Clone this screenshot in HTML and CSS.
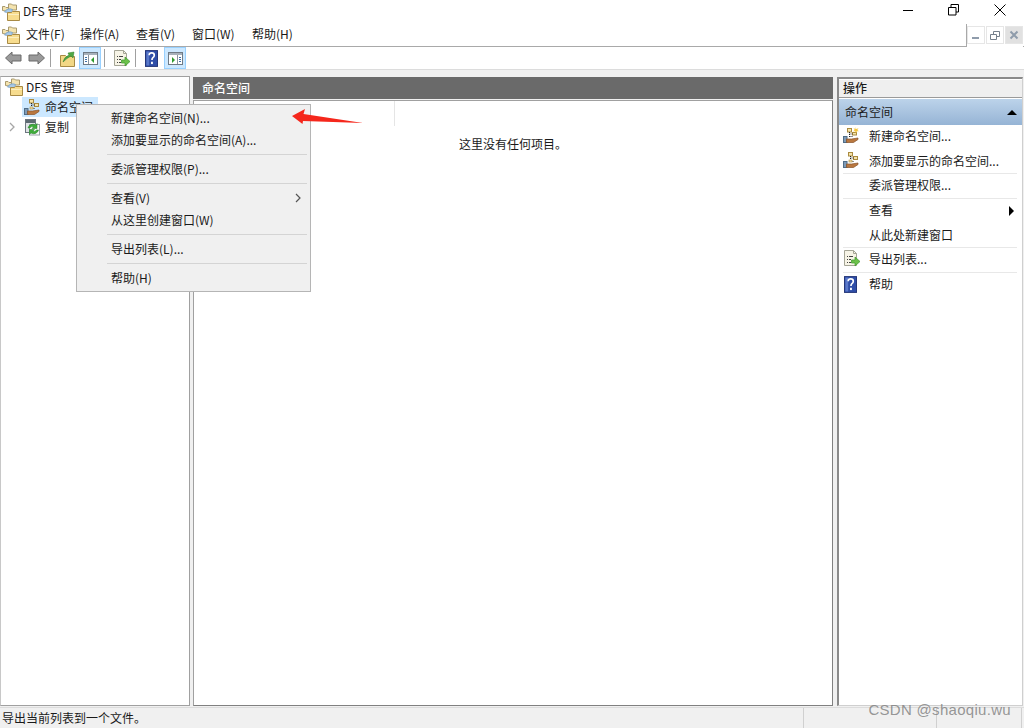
FILE: index.html
```html
<!DOCTYPE html>
<html lang="zh-CN">
  <head>
    <meta charset="UTF-8" />
    <title>DFS 管理</title>
    <link rel="stylesheet" href="styles.css">
  </head>
  <body>
    <svg class="defs" width="0" height="0">
      <defs>
        <symbol id="dfs" viewBox="0 0 18 18">
          <path d="M.5 7.500 v-4 h2.500 l1 1 h3 v4 z" fill="#f4e3ae" stroke="#a99a6e"/>
          <path d="M6.500 4 v-3 h3 l1 1 h4 v5 h-8 z" fill="#f4e3ae" stroke="#a99a6e"/>
          <path d="M2.500 9 a6 6 0 0 1 8 -2.500 l-1 3 h-4 z" fill="#a9c9e6" stroke="#6f9bc4" stroke-width=".7"/>
          <path d="M5.500 9.500 h4 l1 -1 h7 v9 h-12 z" fill="#f7dc8e" stroke="#a88a45"/>
          <path d="M6 11.500 h11" stroke="#fbeec0"/>
        </symbol>
        <symbol id="ns" viewBox="0 0 16 16">
          <rect x="5.500" y=".5" width="4" height="3.500" fill="#f6e3a8" stroke="#a98a3f"/>
          <rect x="10.500" y="4.500" width="4" height="3" fill="#f6e3a8" stroke="#a98a3f"/>
          <path d="M7.500 4 v5.500 M7.500 6 h3 M7.500 9.500 h3" stroke="#222" stroke-dasharray="1 1" fill="none"/>
          <rect x="6" y="8" width="3" height="2" fill="#f6e3a8" stroke="#a98a3f" stroke-width=".6"/>
          <rect x=".5" y="9.500" width="3.500" height="6" fill="#7f9ab5" stroke="#4f6d88"/>
          <path d="M3.500 12 h5 l6.500 -1 v1.500 l-4.500 3 h-7 z" fill="#b9773f" stroke="#86532a" stroke-width=".7"/>
        </symbol>
        <symbol id="nsnew" viewBox="0 0 16 16">
          <rect x="4.500" y="1.500" width="4" height="3.500" fill="#f6e3a8" stroke="#a98a3f"/>
          <rect x="9.500" y="5.500" width="4" height="2.500" fill="#f6e3a8" stroke="#a98a3f"/>
          <path d="M6.500 5 v5 M6.500 7 h3 M6.500 9.500 h3" stroke="#222" stroke-dasharray="1 1" fill="none"/>
          <rect x=".5" y="9.500" width="3.500" height="6" fill="#7f9ab5" stroke="#4f6d88"/>
          <path d="M3.500 12 h5 l6.500 -1 v1.500 l-4.500 3 h-7 z" fill="#b9773f" stroke="#86532a" stroke-width=".7"/>
          <path d="M12.500 0 l.8 2 l2.200 -.8 l-1.200 1.900 l1.700 1.200 h-2.200 l-.8 2 l-.8 -2 h-2.200 l1.700 -1.200 l-1.200 -1.900 l2.200 .8 z" fill="#f5c63a"/>
        </symbol>
        <symbol id="repl" viewBox="0 0 17 17">
          <rect x="1.500" y=".5" width="10" height="13" fill="#dfe3e6" stroke="#6d7680"/>
          <rect x="2" y="1" width="9" height="3" fill="#5d6a72"/>
          <rect x="5.500" y="5.500" width="10" height="10.500" fill="#fbfbfb" stroke="#9aa2a8"/>
          <path d="M4 9 a5 5 0 0 1 7.500 -3 l1.500 -1.500 v5 h-5 l1.600 -1.600 a3 3 0 0 0 -3.600 1.100 z" fill="#3fae3a" stroke="#1f7a22" stroke-width=".5"/>
          <path d="M14.500 11 a5 5 0 0 1 -7.500 3 l-1.500 1.500 v-5 h5 l-1.600 1.600 a3 3 0 0 0 3.600 -1.100 z" fill="#3fae3a" stroke="#1f7a22" stroke-width=".5"/>
        </symbol>
        <symbol id="export" viewBox="0 0 17 17">
          <path d="M1.500 .5 h9 l3 3 v12 h-12 z" fill="#f7f4e6" stroke="#a5a595"/>
          <path d="M10.500 .5 v3 h3" fill="none" stroke="#a5a595"/>
          <path d="M4 6.500 h1 m1 0 h4 M4 9.500 h1 m1 0 h2 M4 12.500 h1 m1 0 h2" stroke="#444"/>
          <path d="M8.500 10 h3.500 v-3 l5 4.500 l-5 4.500 v-3 h-3.500 z" fill="#6cc04a" stroke="#3c9a2b" stroke-width=".7"/>
        </symbol>
        <symbol id="help" viewBox="0 0 14 18">
          <rect x=".5" y=".5" width="13" height="17" fill="#2f4ea8" stroke="#1d2f73"/>
          <rect x="1.500" y="1.500" width="3" height="15" fill="#5a78c9"/>
          <path d="M4.500 5.500 q0 -2.500 2.700 -2.500 q2.800 0 2.800 2.500 q0 1.500 -1.500 2.500 q-1 .8 -1 2.500" fill="none" stroke="#fff" stroke-width="1.800"/>
          <rect x="6.500" y="12.500" width="2" height="2.500" fill="#fff"/>
        </symbol>
      </defs>
    </svg>

    <header class="titlebar">
      <svg class="icon16"><use href="#dfs"/></svg>
      <span class="apptitle">DFS 管理</span>
      <div class="winbtns">
        <svg width="46" height="22" viewBox="0 0 46 22"><path d="M17 10.500 h10" stroke="#000"/></svg>
        <svg width="46" height="22" viewBox="0 0 46 22"><path d="M16.500 7.500 h7.500 v7.500 h-7.500 z M19 7 v-2.500 h7.500 v7.500 h-2.500" fill="none" stroke="#000"/></svg>
        <svg width="46" height="22" viewBox="0 0 46 22"><path d="M16.500 4.500 l11 11 M27.500 4.500 l-11 11" stroke="#000"/></svg>
      </div>
    </header>

    <div class="menubar">
      <svg class="icon16"><use href="#dfs"/></svg>
      <nav class="menus">
        <span>文件(F)</span>
        <span>操作(A)</span>
        <span>查看(V)</span>
        <span>窗口(W)</span>
        <span>帮助(H)</span>
      </nav>
      <div class="mdibtns">
        <span class="mdibtn"><svg width="16" height="16"><rect x="4" y="10" width="7" height="2" fill="#8f9cab"/></svg></span>
        <span class="mdibtn"><svg width="16" height="16"><path d="M3.500 7.500 h6 v5 h-6 z M6.500 7 v-2.500 h6 v5 h-3" fill="none" stroke="#75808c"/></svg></span>
        <span class="mdibtn closebtn"><svg width="16" height="16"><path d="M4.500 4.500 l7 7 M11.500 4.500 l-7 7" stroke="#8f9cab" stroke-width="2"/></svg></span>
      </div>
    </div>

    <div class="toolbar">
      <svg class="tool" width="17" height="14" viewBox="0 0 17 14"><path d="M.5 7 L7 1 V4 H16 V10 H7 V13 Z" fill="#9a9a9a" stroke="#6b6b6b"/></svg>
      <svg class="tool gap7" width="17" height="14" viewBox="0 0 17 14"><path d="M16.500 7 L10 1 V4 H1 V10 H10 V13 Z" fill="#9a9a9a" stroke="#6b6b6b"/></svg>
      <i class="tsep"></i>
      <svg class="tool upfolder" width="15" height="17" viewBox="0 0 15 17"><path d="M.5 5.500 h5 l1 1 h8 v10 h-14 z" fill="#f2d785" stroke="#a88a45"/><path d="M3 12 q1 -5 6 -7 l-1 -2 l6 -1 l-1 6 l-2 -2 q-4 2 -8 6 z" fill="#4fa845" stroke="#2d7a2a" stroke-width=".5"/></svg>
      <span class="toolon">
        <svg width="15" height="13" viewBox="0 0 15 13"><rect x=".5" y=".5" width="14" height="12" fill="#fff" stroke="#6f7a85"/><rect x="1" y="1" width="13" height="2" fill="#a7b1bb"/><path d="M5.500 3 v9" stroke="#8a949e"/><path d="M2 5.500 h2 M2 7.500 h2 M2 9.500 h2" stroke="#3d6fa8"/><path d="M11 5 v6 l-3 -3 z" fill="#2e9b2e"/></svg>
      </span>
      <i class="tsep"></i>
      <svg class="tool exportbtn" width="17" height="17"><use href="#export"/></svg>
      <i class="tsep"></i>
      <svg class="tool helpbtn" width="13" height="17"><use href="#help"/></svg>
      <span class="toolon lasttool">
        <svg width="15" height="13" viewBox="0 0 15 13"><rect x=".5" y=".5" width="14" height="12" fill="#fff" stroke="#6f7a85"/><rect x="1" y="1" width="13" height="2" fill="#a7b1bb"/><path d="M9.500 3 v9" stroke="#8a949e"/><path d="M11 5.500 h2 M11 7.500 h2 M11 9.500 h2" stroke="#3d6fa8"/><path d="M4 5 v6 l3 -3 z" fill="#2e9b2e"/></svg>
      </span>
    </div>

    <main class="workarea">
      <aside class="tree">
        <div class="treeitem">
          <svg class="icon16"><use href="#dfs"/></svg>
          <span>DFS 管理</span>
        </div>
        <div class="treeitem sub selected">
          <svg class="icon16"><use href="#ns"/></svg>
          <span>命名空间</span>
        </div>
        <div class="treeitem repl">
          <svg class="chev" width="6" height="10" viewBox="0 0 6 10"><path d="M1 1 l4 4 l-4 4" fill="none" stroke="#a6a6a6" stroke-width="1.300"/></svg>
          <svg class="icon16"><use href="#repl"/></svg>
          <span>复制</span>
        </div>
      </aside>

      <section class="center">
        <h2 class="panehead">命名空间</h2>
        <div class="listbox">
          <div class="colhead"><i class="coldiv"></i></div>
          <p class="empty">这里没有任何项目。</p>
        </div>
      </section>

      <aside class="actions">
        <h2 class="acthead">操作</h2>
        <div class="actsub"><span>命名空间</span><i class="uptri"></i></div>
        <ul class="actlist">
          <li><svg class="acticon" width="16" height="16"><use href="#nsnew"/></svg>新建命名空间...</li>
          <li class="sepafter"><svg class="acticon" width="16" height="16"><use href="#ns"/></svg>添加要显示的命名空间...</li>
          <li class="sepafter noicon">委派管理权限...</li>
          <li class="noicon">查看<i class="righttri"></i></li>
          <li class="sepafter noicon">从此处新建窗口</li>
          <li class="sepafter"><svg class="acticon" width="17" height="17"><use href="#export"/></svg>导出列表...</li>
          <li><svg class="acticon helpicon" width="13" height="17"><use href="#help"/></svg>帮助</li>
        </ul>
      </aside>
    </main>

    <footer class="statusbar">
      <span class="stmain">导出当前列表到一个文件。</span>
      <span class="stcell wide"></span>
      <span class="stcell last"></span>
    </footer>

    <div class="ctxmenu">
      <div class="ctxitem">新建命名空间(N)...</div>
      <div class="ctxitem">添加要显示的命名空间(A)...</div>
      <hr />
      <div class="ctxitem">委派管理权限(P)...</div>
      <hr />
      <div class="ctxitem">查看(V)<svg class="ctxchev" width="6" height="10" viewBox="0 0 6 10"><path d="M1 1 l4 4 l-4 4" fill="none" stroke="#555" stroke-width="1.200"/></svg></div>
      <div class="ctxitem">从这里创建窗口(W)</div>
      <hr />
      <div class="ctxitem">导出列表(L)...</div>
      <hr />
      <div class="ctxitem">帮助(H)</div>
    </div>

    <svg class="redarrow" width="72" height="18" viewBox="0 0 72 18"><path d="M0 8 L13 1 L11.500 6 L71 15 L11 13 L10.500 16 Z" fill="#f5271c"/></svg>
    <div class="watermark">CSDN @shaoqiu.wu</div>
  </body>
</html>
```

FILE: styles.css
```css
* {
  box-sizing: border-box;
}
html,
body {
  margin: 0;
  height: 100%;
}
body {
  width: 1024px;
  height: 728px;
  overflow: hidden;
  display: flex;
  flex-direction: column;
  background-color: #f0f0f0;
  color: #1a1a1a;
  font-family: "Noto Sans CJK SC", "Liberation Sans", sans-serif;
  font-size: 12px;
  line-height: 16px;
  position: relative;
}
.defs {
  position: absolute;
}
.icon16 {
  width: 18px;
  height: 18px;
  flex: none;
}

/* title + menu */
.titlebar {
  height: 24px;
  flex: none;
  display: flex;
  align-items: center;
  padding-left: 2px;
  background-color: #fff;
}
.apptitle {
  margin-left: 3px;
  margin-top: -2px;
}
.winbtns {
  margin-left: auto;
  display: flex;
  margin-top: -3px;
}
.menubar {
  height: 23px;
  flex: none;
  display: flex;
  align-items: center;
  padding-left: 2px;
  background-color: #fff;
  border-bottom: 1px solid #a9a9a9;
}
.menus {
  display: grid;
  grid-template-columns: 54px 56px 56px 60px auto;
  margin-left: 6px;
  margin-top: -2px;
}
.mdibtns {
  margin-left: auto;
  margin-right: 1px;
  height: 23px;
  display: flex;
  gap: 1px;
  padding-top: 2px;
  border-left: 1px solid #a9a9a9;
  background-color: #fff;
}
.mdibtn {
  width: 18px;
  height: 18px;
  display: flex;
  align-items: center;
  justify-content: center;
  border: 1px solid #e6e6e6;
}
.closebtn {
  background-color: #e1e1e1;
}

/* toolbar */
.toolbar {
  height: 23px;
  flex: none;
  display: flex;
  align-items: center;
  padding-left: 5px;
  background-color: #fff;
  border-bottom: 1px solid #dcdcdc;
}
.gap7 {
  margin-left: 6px;
}
.tsep {
  width: 1px;
  height: 18px;
  background-color: #a0a0a0;
  margin-left: 5px;
}
.upfolder {
  margin-left: 9px;
}
.toolon {
  width: 22px;
  height: 22px;
  display: flex;
  align-items: center;
  justify-content: center;
  background-color: #cce8ff;
  border: 1px solid #99d1ff;
  margin-left: 4px;
}
.toolon + .tsep {
  margin-left: 3px;
}
.exportbtn {
  margin-left: 8px;
}
.exportbtn + .tsep {
  margin-left: 5px;
}
.helpbtn {
  margin-left: 9px;
}
.lasttool {
  margin-left: 6px;
}

/* panes */
.workarea {
  flex: 1;
  display: flex;
  gap: 3px;
  padding-top: 6px;
  min-height: 0;
}
.tree {
  width: 190px;
  background-color: #fff;
  border: 1px solid #a0a0a0;
  border-left: 1px solid #c8c8c8;
  margin-bottom: 1px;
}
.treeitem {
  height: 20px;
  display: flex;
  align-items: center;
  gap: 3px;
  padding-left: 4px;
}
.treeitem.sub {
  margin-left: 21px;
  width: 76px;
  padding-left: 2px;
  gap: 5px;
  background-color: #cce8ff;
}
.treeitem.sub .icon16 {
  width: 16px;
  height: 16px;
}
.treeitem.repl {
  padding-left: 8px;
  gap: 4px;
}
.treeitem.repl .icon16 {
  width: 17px;
  height: 17px;
  margin-left: 5px;
}
.center {
  width: 640px;
  display: flex;
  flex-direction: column;
  margin-bottom: 1px;
}
.panehead {
  margin: 1px 0 0;
  height: 22px;
  padding-left: 9px;
  font-size: 12px;
  font-weight: 500;
  line-height: 21px;
  color: #fff;
  background-color: #6a6a6a;
}
.listbox {
  flex: 1;
  margin-top: 1px;
  background-color: #fff;
  border: 1px solid #a0a0a0;
  border-bottom-color: #808080;
  border-right-color: #808080;
}
.colhead {
  height: 25px;
  display: flex;
}
.coldiv {
  width: 1px;
  height: 25px;
  margin-left: 200px;
  background-color: #e5e5e5;
}
.empty {
  margin: 10px 0 0;
  text-align: center;
}
.actions {
  flex: 1;
  margin: 1px 1px 1px 1px;
  background-color: #fff;
  border: 1px solid #cfcfcf;
  border-left: 2px solid #8a8a8a;
  border-top: 2px solid #8a8a8a;
}
.acthead {
  margin: 0;
  height: 19px;
  padding-left: 4px;
  font-size: 12px;
  font-weight: 500;
  line-height: 18px;
  background-color: #efefef;
  border-bottom: 1px solid #9a9a9a;
  box-shadow: inset 0 1px 0 #fff;
}
.actsub {
  height: 26px;
  margin-top: 1px;
  display: flex;
  align-items: center;
  justify-content: space-between;
  padding: 0 5px 0 6px;
  background: linear-gradient(#bcd3ea, #96b4d5);
}
.uptri {
  width: 0;
  height: 0;
  border-left: 5px solid transparent;
  border-right: 5px solid transparent;
  border-bottom: 5px solid #000;
}
.actlist {
  list-style: none;
  margin: 0;
  padding: 0 0 0 4px;
}
.actlist li {
  height: 24.700px;
  display: flex;
  align-items: center;
  padding-left: 26px;
  padding-bottom: 2px;
  position: relative;
}
.actlist li.sepafter {
  border-bottom: 1px solid #e8e8e8;
  margin-right: 5px;
}
.acticon {
  position: absolute;
  left: 0;
  top: 2px;
}
.helpicon {
  left: 1px;
  top: 3px;
}
.righttri {
  position: absolute;
  left: 166px;
  top: 7px;
  width: 0;
  height: 0;
  border-top: 5px solid transparent;
  border-bottom: 5px solid transparent;
  border-left: 5px solid #000;
}

/* status */
.statusbar {
  height: 21px;
  flex: none;
  display: flex;
  align-items: center;
  background-color: #f0f0f0;
  border-top: 1px solid #dcdcdc;
}
.stmain {
  width: 803px;
  padding-left: 2px;
}
.stcell {
  height: 100%;
  border-left: 1px solid #d0d0d0;
}
.wide {
  width: 133px;
}
.last {
  flex: 1;
  border-right: 1px solid #d0d0d0;
  margin-right: 2px;
}

/* context menu */
.ctxmenu {
  position: absolute;
  left: 76px;
  top: 104px;
  width: 235px;
  height: 188px;
  padding: 2px;
  background-color: #f0f0f0;
  border: 1px solid #b5b5b5;
}
.ctxitem {
  height: 22px;
  padding-left: 32px;
  line-height: 21px;
  position: relative;
}
.ctxmenu hr {
  height: 1px;
  margin: 3px 1px 3px 28px;
  border: 0;
  background-color: #d4d4d4;
}
.ctxchev {
  position: absolute;
  right: 7px;
  top: 6px;
}
.redarrow {
  position: absolute;
  left: 292px;
  top: 108px;
}
.watermark {
  position: absolute;
  right: 13px;
  top: 702px;
  font-family: "Liberation Sans", sans-serif;
  font-size: 15px;
  letter-spacing: .3px;
  color: #7d7d7dcc;
}
```
